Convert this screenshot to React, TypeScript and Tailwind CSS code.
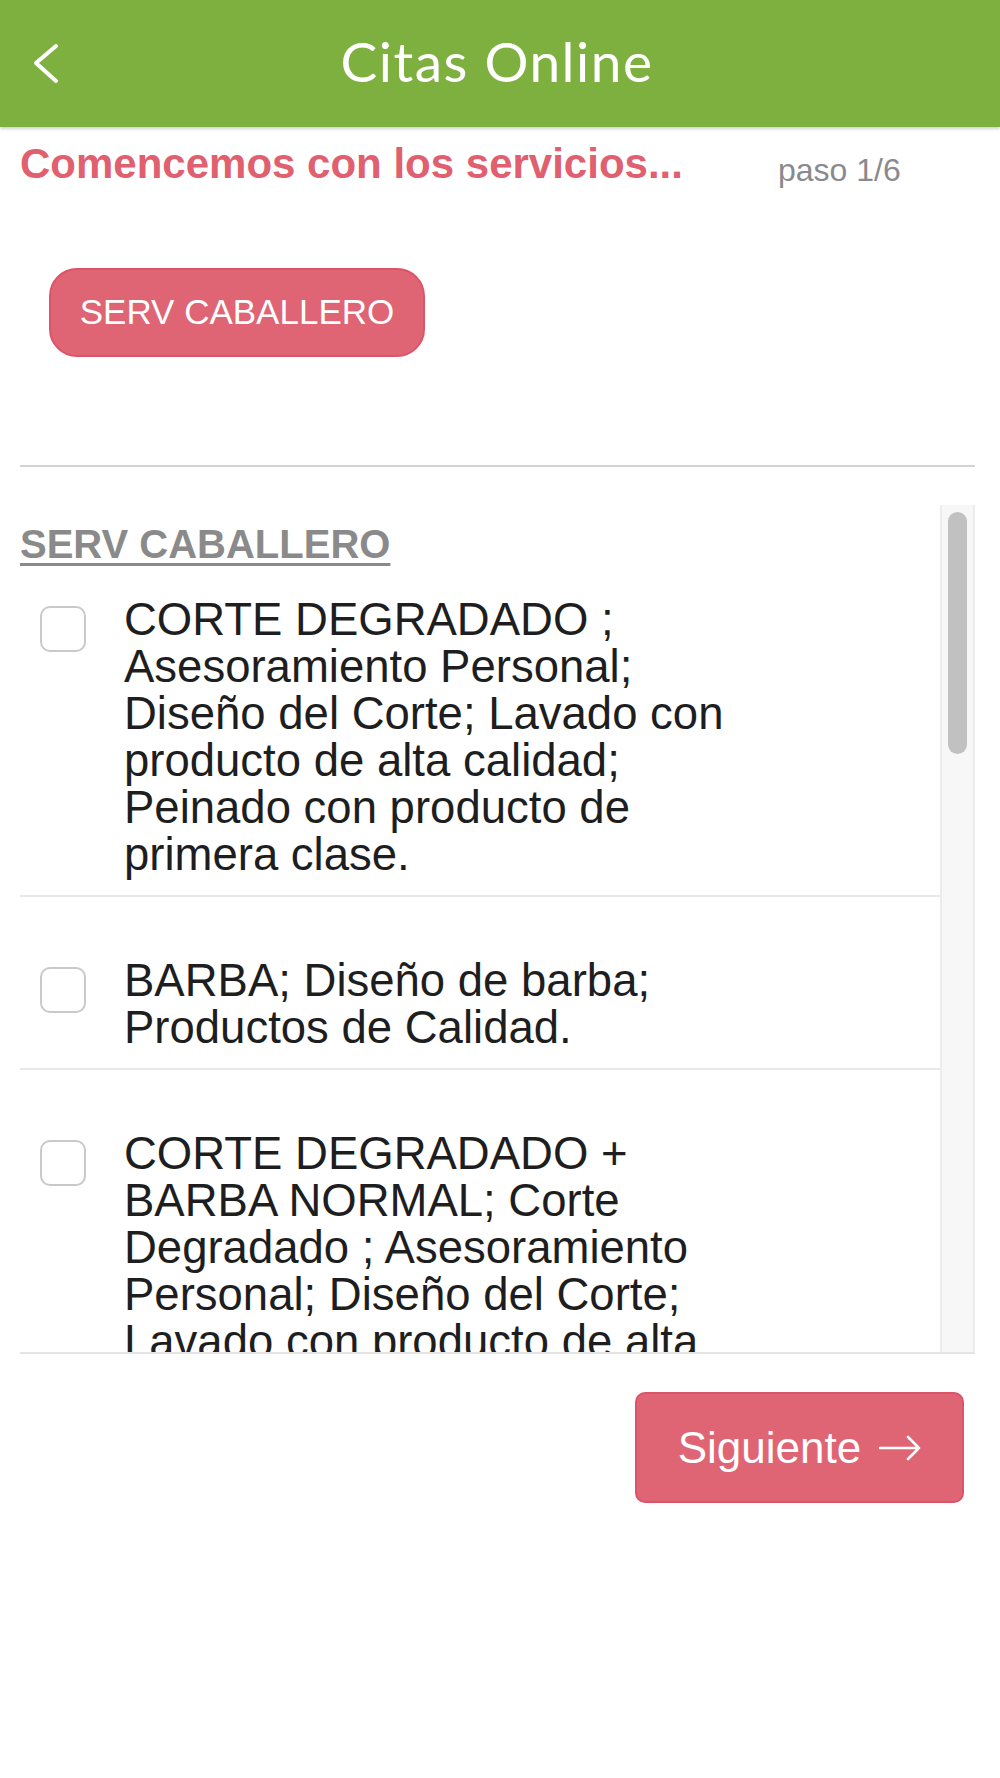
import React from "react";

const items = [
  "CORTE DEGRADADO ; Asesoramiento Personal; Diseño del Corte; Lavado con producto de alta calidad; Peinado con producto de primera clase.",
  "BARBA; Diseño de barba; Productos de Calidad.",
  "CORTE DEGRADADO + BARBA NORMAL; Corte Degradado ; Asesoramiento Personal; Diseño del Corte; Lavado con producto de alta calidad; Peinado con producto de primera clase.",
];

export default function App() {
  return (
    <div className="w-[1000px] min-h-[1778px] bg-white font-['Liberation_Sans',Arial,sans-serif]">
      {/* Header */}
      <header className="relative z-10 grid h-[127px] grid-cols-[1fr_auto_1fr] items-center bg-[#7eb040] shadow-[0_2px_3px_rgba(0,0,0,0.18)]">
        <div className="pl-[33px]">
          <svg width="28" height="42" viewBox="0 0 28 42" fill="none">
            <polyline
              points="23,3 3,20 23,38"
              stroke="white"
              strokeWidth="4"
              strokeLinecap="round"
              strokeLinejoin="round"
            />
          </svg>
        </div>
        <h1 className="-mt-[4px] pr-[6px] font-['Lato',sans-serif] text-[55px] leading-none tracking-[1.5px] text-white">
          Citas Online
        </h1>
        <div />
      </header>

      {/* Title row */}
      <div className="mt-[13px] flex items-start px-[20px]">
        <div className="w-[758px] text-[42px] font-bold leading-[48px] text-[#e0606f]">
          Comencemos con los servicios...
        </div>
        <div className="mt-[10px] text-[32px] leading-[40px] text-[#8a8a8e]">paso 1/6</div>
      </div>

      {/* Category button */}
      <div className="mt-[78px] pl-[49px]">
        <button className="flex h-[89px] w-[376px] items-center justify-center rounded-[28px] border-2 border-[#dc5467] bg-[#e06574] text-[35px] text-white">
          SERV CABALLERO
        </button>
      </div>

      {/* Divider */}
      <div className="ml-[20px] mr-[25px] mt-[108px] h-[2px] bg-[#d2d2d2]" />

      {/* List box */}
      <div className="ml-[20px] mr-[25px] mt-[38px] flex h-[849px] border-b-2 border-[#e4e4e4]">
        <div className="flex-1 overflow-hidden">
          <div className="pt-[17px] text-[40px] font-bold leading-[44px] text-[#8a8a8a] underline decoration-[3px] underline-offset-[5px]">
            SERV CABALLERO
          </div>
          {items.map((t, i) => (
            <div
              key={i}
              className={`flex border-b-2 border-[#e8e8e8] pb-[17px] ${i === 0 ? "pt-[30px]" : "pt-[60px]"}`}
            >
              <div className="ml-[20px] mt-[10px] h-[46px] w-[46px] shrink-0 rounded-[10px] border-2 border-[#c9c9c9] bg-white" />
              <div className="ml-[38px] w-[630px] text-[45.5px] leading-[47px] text-[#1e1e20]">{t}</div>
            </div>
          ))}
        </div>
        <div className="w-[35px] border-x-2 border-[#ececec] bg-[#f7f7f7] px-[6px] pt-[7px]">
          <div className="h-[242px] w-[19px] rounded-full bg-[#c1c1c1]" />
        </div>
      </div>

      {/* Next button */}
      <div className="mt-[38px] flex justify-end pr-[36px]">
        <button className="flex h-[111px] w-[329px] items-center justify-center gap-[18px] rounded-[10px] border-2 border-[#dc5467] bg-[#e06574] text-[44px] text-white">
          <span>Siguiente</span>
          <svg width="42" height="26" viewBox="0 0 42 26" fill="none">
            <path d="M1 13 H40 M29 2 L40 13 L29 24" stroke="white" strokeWidth="2.6" strokeLinecap="round" strokeLinejoin="round" />
          </svg>
        </button>
      </div>
    </div>
  );
}
